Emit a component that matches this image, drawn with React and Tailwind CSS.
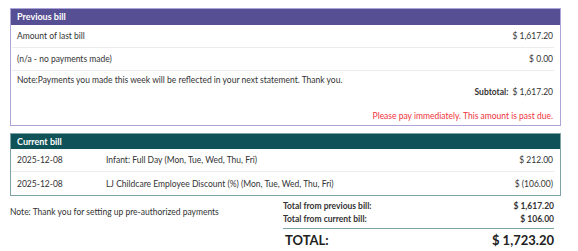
import React from "react";

const prevRows = [
  { label: "Amount of last bill", amount: "$ 1,617.20" },
  { label: "(n/a - no payments made)", amount: "$ 0.00" },
];

const currentRows = [
  { date: "2025-12-08", desc: "Infant: Full Day (Mon, Tue, Wed, Thu, Fri)", amount: "$ 212.00" },
  {
    date: "2025-12-08",
    desc: "LJ Childcare Employee Discount (%) (Mon, Tue, Wed, Thu, Fri)",
    amount: "$ (106.00)",
  },
];

export default function App() {
  return (
    <div className="w-[578px] h-[251px] bg-white text-[#333] font-['Lato','Liberation_Sans',sans-serif] text-[8.5px] leading-[12px] pt-[8px] pl-[10px] overflow-hidden">
      <div className="w-[551px]">
        {/* previous bill */}
        <div className="border border-[#aaa5d6]">
          <div className="h-[16px] bg-[#574f93] text-white text-[9px] font-bold flex items-center px-[6px]">
            Previous bill
          </div>
          {prevRows.map((r) => (
            <div
              key={r.label}
              className="mx-[1px] mr-[6px] h-[23px] flex items-center justify-between pl-[5px] pr-[1px] border-b border-[#ececec]"
            >
              <span>{r.label}</span>
              <span>{r.amount}</span>
            </div>
          ))}
          <div className="pl-[6px] pr-[7px] pt-[3px] pb-[3px]">
            <div>Note:Payments you made this week will be reflected in your next statement. Thank you.</div>
            <div className="flex justify-end gap-[4px]">
              <span className="font-bold">Subtotal:</span>
              <span>$ 1,617.20</span>
            </div>
            <div className="text-right text-[#f0323c] mt-[12px]">
              Please pay immediately. This amount is past due.
            </div>
          </div>
        </div>

        {/* current bill */}
        <div className="border border-[#7fa3a5] mt-[7px]">
          <div className="h-[15px] bg-[#0f5257] text-white text-[9px] font-bold flex items-center px-[6px]">
            Current bill
          </div>
          {currentRows.map((r, i) => (
            <div
              key={i}
              className={`mr-[6px] h-[23px] flex items-center pl-[6px] pr-[1px] ${
                i === 0 ? "border-b border-[#ececec]" : ""
              }`}
            >
              <span className="w-[89px]">{r.date}</span>
              <span className="flex-1">{r.desc}</span>
              <span>{r.amount}</span>
            </div>
          ))}
        </div>

        {/* totals */}
        <div className="flex mt-[4px]">
          <div className="w-[273px] pt-[6px]">Note: Thank you for setting up pre-authorized payments</div>
          <div className="flex-1 mr-[7px]">
            <div className="flex justify-between font-bold leading-[13px]">
              <span>Total from previous bill:</span>
              <span>$ 1,617.20</span>
            </div>
            <div className="flex justify-between font-bold leading-[13px] pb-[2px] border-b border-[#7fa3a5]">
              <span>Total from current bill:</span>
              <span>$ 106.00</span>
            </div>
            <div className="flex justify-between font-bold text-[13px] leading-[22px] pl-[2px] text-[#222]">
              <span>TOTAL:</span>
              <span>$ 1,723.20</span>
            </div>
          </div>
        </div>
      </div>
    </div>
  );
}
